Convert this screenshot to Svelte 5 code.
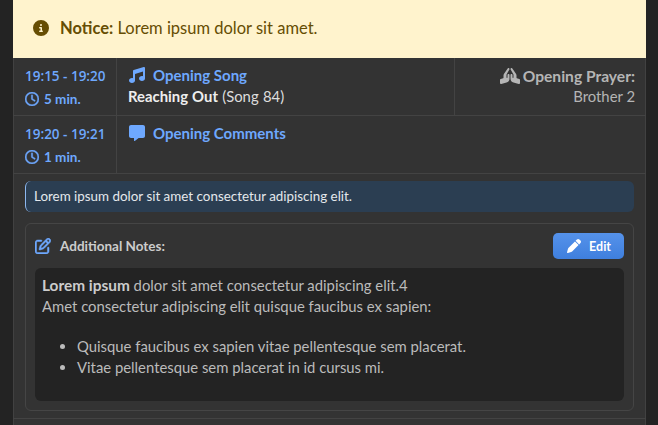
<script lang="ts">
  // Meeting schedule panel: notice, two timed parts, a note and an editable notes card.
  const ICONS = {
    info: { box: "0 0 512 512", d: "M256 512A256 256 0 1 0 256 0a256 256 0 1 0 0 512zM216 336h24V272H216c-13.3 0-24-10.7-24-24s10.7-24 24-24h48c13.3 0 24 10.7 24 24v88h8c13.3 0 24 10.7 24 24s-10.7 24-24 24H216c-13.3 0-24-10.7-24-24s10.7-24 24-24zm40-208a32 32 0 1 1 0 64 32 32 0 1 1 0-64z" },
    music: { box: "0 0 512 512", d: "M499.1 6.3c8.1 6 12.9 15.6 12.9 25.7v72V368c0 44.2-43 80-96 80s-96-35.8-96-80s43-80 96-80c11.2 0 22 1.6 32 4.6V147L192 223.8V432c0 44.2-43 80-96 80s-96-35.8-96-80s43-80 96-80c11.2 0 22 1.6 32 4.6V200 128c0-14.1 9.3-26.6 22.8-30.7l320-96c9.7-2.9 20.2-1.1 28.3 5z" },
    message: { box: "0 0 512 512", d: "M64 0C28.7 0 0 28.7 0 64V352c0 35.3 28.7 64 64 64h96v80c0 6.1 3.4 11.6 8.8 14.3s11.9 2.1 16.8-1.5L309.3 416H448c35.3 0 64-28.7 64-64V64c0-35.3-28.7-64-64-64H64z" },
    clock: { box: "0 0 512 512", d: "M464 256A208 208 0 1 1 48 256a208 208 0 1 1 416 0zM0 256a256 256 0 1 0 512 0A256 256 0 1 0 0 256zM232 120V256c0 8 4 15.5 10.7 20l96 64c11 7.4 25.9 4.4 33.3-6.7s4.4-25.9-6.7-33.3L280 243.2V120c0-13.3-10.7-24-24-24s-24 10.7-24 24z" },
    pray: { box: "0 0 640 512", d: "M351.2 4.8c3.2-2 6.6-3.3 10-4.1c4.7-1 9.6-.9 14.1 .1c7.7 1.8 14.8 6.5 19.4 13.6L514.6 194.2c8.8 13.1 13.4 28.6 13.4 44.4v73.5c0 6.9 4.4 13 10.9 15.2l79.2 26.4C631.2 358 640 370.2 640 384v96c0 9.9-4.6 19.3-12.5 25.4s-18.1 8.1-27.7 5.5L431 465.9c-56-14.9-95-65.7-95-123.7V224c0-17.7 14.3-32 32-32s32 14.3 32 32v80c0 8.8 7.2 16 16 16s16-7.2 16-16V219.1c0-7-1.8-13.8-5.3-19.8L340.3 48.1c-1.7-3-2.9-6.1-3.6-9.3c-1-4.7-1-9.6 .1-14.1c1.9-8 6.8-15.2 14.4-19.9zm-62.4 0c7.5 4.6 12.4 11.9 14.4 19.8c1.1 4.6 1.2 9.4 .1 14.1c-.7 3.2-1.9 6.3-3.6 9.3L213.3 199.3c-3.5 6-5.3 12.9-5.3 19.8V304c0 8.8 7.2 16 16 16s16-7.2 16-16V224c0-17.7 14.3-32 32-32s32 14.3 32 32V342.3c0 58-39 108.7-95 123.7l-168.7 45c-9.6 2.6-19.9 .5-27.7-5.5S0 490 0 480V384c0-13.8 8.8-26 21.9-30.4l79.2-26.4c6.5-2.2 10.9-8.3 10.9-15.2V238.5c0-15.8 4.7-31.2 13.4-44.4L245.2 14.5c4.6-7.1 11.7-11.8 19.4-13.6c4.6-1.1 9.4-1.2 14.1-.1c3.5 .8 6.9 2.2 10 4.1z" },
    edit: { box: "0 0 512 512", d: "M441 58.9L453.1 71c9.4 9.4 9.4 24.6 0 33.9L424 134.1 377.9 88 407 58.9c9.4-9.4 24.6-9.4 33.9 0zM209.8 256.2L344 121.9 390.1 168 255.8 302.2c-2.9 2.9-6.5 5-10.4 6.1l-58.5 16.7 16.7-58.5c1.1-3.9 3.2-7.5 6.1-10.4zM373.1 25L175.8 222.2c-8.7 8.7-15 19.4-18.3 31.1l-28.6 100c-2.4 8.4-.1 17.4 6.1 23.6s15.2 8.5 23.6 6.1l100-28.6c11.8-3.4 22.5-9.7 31.1-18.3L487 138.9c28.1-28.1 28.1-73.7 0-101.8L474.9 25C446.8-3.1 401.2-3.1 373.1 25zM88 64C39.4 64 0 103.4 0 152V424c0 48.6 39.4 88 88 88H360c48.6 0 88-39.4 88-88V312c0-13.3-10.7-24-24-24s-24 10.7-24 24V424c0 22.1-17.9 40-40 40H88c-22.1 0-40-17.9-40-40V152c0-22.1 17.9-40 40-40H200c13.3 0 24-10.7 24-24s-10.7-24-24-24H88z" },
    pen: { box: "0 0 512 512", d: "M362.7 19.3L314.3 67.7 444.3 197.7l48.4-48.4c25-25 25-65.5 0-90.5L453.3 19.3c-25-25-65.5-25-90.5 0zm-71 71L58.6 323.5c-10.4 10.4-18 23.3-22.2 37.4L1 481.2C-1.5 489.7 .8 498.8 7 505s15.3 8.5 23.7 6.1l120.3-35.4c14.1-4.2 27-11.8 37.4-22.2L421.7 220.3 291.7 90.3z" },
  };
</script>

{#snippet icon(name: keyof typeof ICONS, cls: string)}
  <svg class={cls} viewBox={ICONS[name].box} aria-hidden="true"><path d={ICONS[name].d} fill="currentColor" /></svg>
{/snippet}

<main class="panel">
  <div class="notice">
    {@render icon("info", "ic-info")}
    <span><strong>Notice:</strong> Lorem ipsum dolor sit amet.</span>
  </div>

  <div class="row">
    <div class="time">
      <div class="range">19:15 - 19:20</div>
      <div class="dur">{@render icon("clock", "ic-clock")} 5 min.</div>
    </div>
    <div class="part">
      <div class="title">{@render icon("music", "ic-part")}<span>Opening Song</span></div>
      <div class="sub"><strong>Reaching Out</strong> (Song 84)</div>
    </div>
    <div class="prayer">
      <div class="who">{@render icon("pray", "ic-pray")}<strong>Opening Prayer:</strong></div>
      <div class="name">Brother 2</div>
    </div>
  </div>

  <div class="row">
    <div class="time">
      <div class="range">19:20 - 19:21</div>
      <div class="dur">{@render icon("clock", "ic-clock")} 1 min.</div>
    </div>
    <div class="part">
      <div class="title">{@render icon("message", "ic-part")}<span>Opening Comments</span></div>
    </div>
  </div>

  <section class="details">
    <div class="hint">Lorem ipsum dolor sit amet consectetur adipiscing elit.</div>

    <div class="notes">
      <header class="notes-head">
        <div class="notes-title">{@render icon("edit", "ic-edit")}<strong>Additional Notes:</strong></div>
        <button class="edit">{@render icon("pen", "ic-pen")}Edit</button>
      </header>
      <div class="notes-body">
        <p><strong>Lorem ipsum</strong> dolor sit amet consectetur adipiscing elit.4<br />Amet consectetur adipiscing elit quisque faucibus ex sapien:</p>
        <ul>
          <li>Quisque faucibus ex sapien vitae pellentesque sem placerat.</li>
          <li>Vitae pellentesque sem placerat in id cursus mi.</li>
        </ul>
      </div>
    </div>
  </section>
</main>

<style>
  :global(body) {
    background: #232323;
    overflow: hidden;
  }
  .panel {
    box-sizing: border-box;
    width: 633px;
    height: 425px;
    margin-left: 13px;
    background: #333;
    color: #ccc;
    font-family: Lato, "Open Sans", sans-serif;
    font-size: 14.85px;
    box-shadow: inset 1px 0 #414141, inset -1px 0 #414141;
    overflow: hidden;
  }
  .notice {
    box-sizing: border-box;
    display: flex;
    align-items: center;
    gap: 11px;
    height: 58px;
    padding: 0 0 2px 20px;
    background: #fff3cd;
    color: #664d03;
    font-size: 16.5px;
  }
  .notice strong { font-weight: 700; }
  .ic-info { width: 16px; height: 16px; flex: none; }

  .row {
    display: flex;
    height: 57px;
    border-bottom: 1px solid #434343;
  }
  .time {
    box-sizing: border-box;
    width: 104px;
    padding: 8px 0 0 12px;
    border-right: 1px solid #434343;
    color: #6ea8fe;
    font-weight: 700;
  }
  .range {
    font-family: "Open Sans", sans-serif;
    font-size: 13.5px;
    font-weight: 600;
    line-height: 20px;
  }
  .dur {
    display: flex;
    align-items: center;
    gap: 5px;
    margin-top: 4px;
    font-size: 13.5px;
    line-height: 18px;
  }
  .ic-clock { width: 14px; height: 14px; stroke: currentColor; stroke-width: 16px; }
  .part {
    flex: 1;
    padding: 6px 0 0 12px;
  }
  .title {
    display: flex;
    align-items: center;
    gap: 8px;
    color: #6ea8fe;
    font-size: 15px;
    font-weight: 700;
    line-height: 22px;
  }
  .ic-part { width: 16px; height: 16px; flex: none; }
  .sub {
    margin-left: -1px;
    word-spacing: 0.5px;
    color: #ddd;
    line-height: 20px;
  }
  .sub strong { color: #eee; }
  .prayer {
    box-sizing: border-box;
    width: 192px;
    padding: 8px 11px 0 0;
    border-left: 1px solid #434343;
    text-align: right;
    color: #b5b5b5;
  }
  .who {
    display: flex;
    justify-content: flex-end;
    align-items: center;
    gap: 3px;
    font-size: 15.6px;
    line-height: 20px;
  }
  .ic-pray { width: 20px; height: 16px; }
  .name { line-height: 21px; }

  .details {
    padding: 7px 12px 7px 12px;
    border-bottom: 1px solid #434343;
  }
  .hint {
    box-sizing: border-box;
    height: 31px;
    padding-left: 8px;
    line-height: 31px;
    border-left: 1px solid #8db8f0;
    border-radius: 6px;
    background: #2b3e52;
    color: #e4e8ec;
    font-size: 13.4px;
  }
  .notes {
    box-sizing: border-box;
    height: 188px;
    margin-top: 11px;
    padding: 9px 9px 9px 9px;
    border: 1px solid #454545;
    border-radius: 6px;
  }
  .notes-head {
    display: flex;
    align-items: center;
    justify-content: space-between;
    height: 26px;
  }
  .notes-title {
    display: flex;
    align-items: center;
    gap: 9px;
    color: #ccc;
    font-size: 13.5px;
  }
  .ic-edit { width: 16px; height: 16px; color: #6ea8fe; stroke: currentColor; stroke-width: 16px; }
  .edit {
    display: flex;
    align-items: center;
    gap: 8px;
    height: 26px;
    padding: 0 13px 0 14px;
    border: 0;
    border-radius: 5px;
    background: linear-gradient(#5592ea, #3f7fdd);
    color: #fff;
    font: 700 12.5px Lato, "Open Sans", sans-serif;
  }
  .ic-pen { width: 14px; height: 14px; }
  .notes-body {
    box-sizing: border-box;
    height: 133px;
    margin-top: 9px;
    padding: 7px;
    border-radius: 6px;
    background: #232323;
    color: #bbb;
    line-height: 20.5px;
  }
  .notes-body p { margin: 0; }
  .notes-body strong { color: #ccc; font-size: 15.4px; }
  .notes-body ul {
    margin: 20px 0 0;
    padding-left: 35px;
  }
</style>
